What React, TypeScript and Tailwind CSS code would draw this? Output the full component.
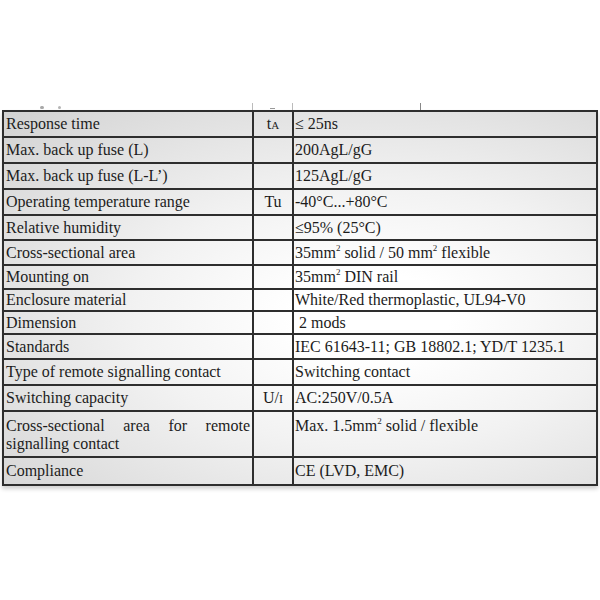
import React from 'react';

type Row = {
  label: React.ReactNode;
  sym?: React.ReactNode;
  value: React.ReactNode;
  h: string;
  tall?: boolean;
};

const Sq = () => <sup className="text-[9px] relative -top-[7px]">2</sup>;

const rows: Row[] = [
  { label: 'Response time', sym: <span>t<span className="text-[11px]">A</span></span>, value: '≤ 25ns', h: 'h-[26px]' },
  { label: 'Max. back up fuse (L)', value: '200AgL/gG', h: 'h-[26px]' },
  { label: 'Max. back up fuse (L-L’)', value: '125AgL/gG', h: 'h-[26px]' },
  { label: 'Operating temperature range', sym: 'Tu', value: '-40°C...+80°C', h: 'h-[26px]' },
  { label: 'Relative humidity', value: '≤95% (25°C)', h: 'h-[25px]' },
  {
    label: 'Cross-sectional area',
    value: (
      <span>
        35mm<Sq /> solid / 50 mm<Sq /> flexible
      </span>
    ),
    h: 'h-[25px]',
  },
  {
    label: 'Mounting on',
    value: (
      <span>
        35mm<Sq /> DIN rail
      </span>
    ),
    h: 'h-[24px]',
  },
  { label: 'Enclosure material', value: 'White/Red thermoplastic, UL94-V0', h: 'h-[22px]' },
  { label: 'Dimension', value: '\u00a02 mods', h: 'h-[23px]' },
  { label: 'Standards', value: 'IEC 61643-11; GB 18802.1; YD/T 1235.1', h: 'h-[25px]' },
  { label: 'Type of remote signalling contact', value: 'Switching contact', h: 'h-[26px]' },
  { label: 'Switching capacity', sym: <span>U/<span className="text-[12px]">I</span></span>, value: 'AC:250V/0.5A', h: 'h-[26px]' },
  {
    label: 'Cross-sectional area for remote signalling contact',
    value: (
      <span>
        Max. 1.5mm<Sq /> solid / flexible
      </span>
    ),
    h: 'h-[46px]',
    tall: true,
  },
  { label: 'Compliance', value: 'CE (LVD, EMC)', h: 'h-[28px]' },
];

export default function App() {
  return (
    <div className="w-[600px] h-[600px] bg-white overflow-hidden font-['Liberation_Serif',serif] text-[16px] text-[#1c1c1c]">
      <div className="pt-[103px] pl-[2px] pr-[2px]">
        {/* faint marks left of the row cut off above */}
        <div className="h-[7px] flex">
          <div className="w-[250px] flex items-end gap-[14px] pl-[38px] pb-[1px]">
            <span className="w-[4px] h-[3px] bg-[#a8a8a8] rounded-full"></span>
            <span className="w-[3px] h-[3px] bg-[#b4b4b4] rounded-full"></span>
          </div>
          <div className="w-[40px] border-l border-[#bbb] flex items-end justify-center pb-[1px]">
            <span className="w-[5px] h-[1px] bg-[#999]"></span>
          </div>
          <div className="w-[128px] border-l border-[#bbb]"></div>
          <div className="flex-1 border-l border-[#888]"></div>
        </div>
        <table className="w-[596px] table-fixed border-collapse border-2 border-[#2e2e2e] bg-[radial-gradient(ellipse_at_62%_55%,#ffffff_15%,#f2f2f2_45%,#d2d2d2_100%)] shadow-[0_3px_4px_rgba(0,0,0,0.18)]">
          <colgroup>
            <col className="w-[250px]" />
            <col className="w-[40px]" />
            <col />
          </colgroup>
          <tbody>
            {rows.map((r, i) => (
              <tr key={i} className={r.h}>
                <td
                  className={
                    'border-2 border-[#2e2e2e] pl-[2px] pr-[2px] leading-[18px] ' +
                    (r.tall ? 'align-top pt-[5px] text-justify' : 'align-middle')
                  }
                >
                  {r.label}
                </td>
                <td className="border-2 border-[#2e2e2e] text-center align-middle leading-[18px]">{r.sym}</td>
                <td
                  className={
                    'border-2 border-[#2e2e2e] pl-[1px] leading-[18px] ' + (r.tall ? 'align-top pt-[5px]' : 'align-middle')
                  }
                >
                  {r.value}
                </td>
              </tr>
            ))}
          </tbody>
        </table>
      </div>
    </div>
  );
}
